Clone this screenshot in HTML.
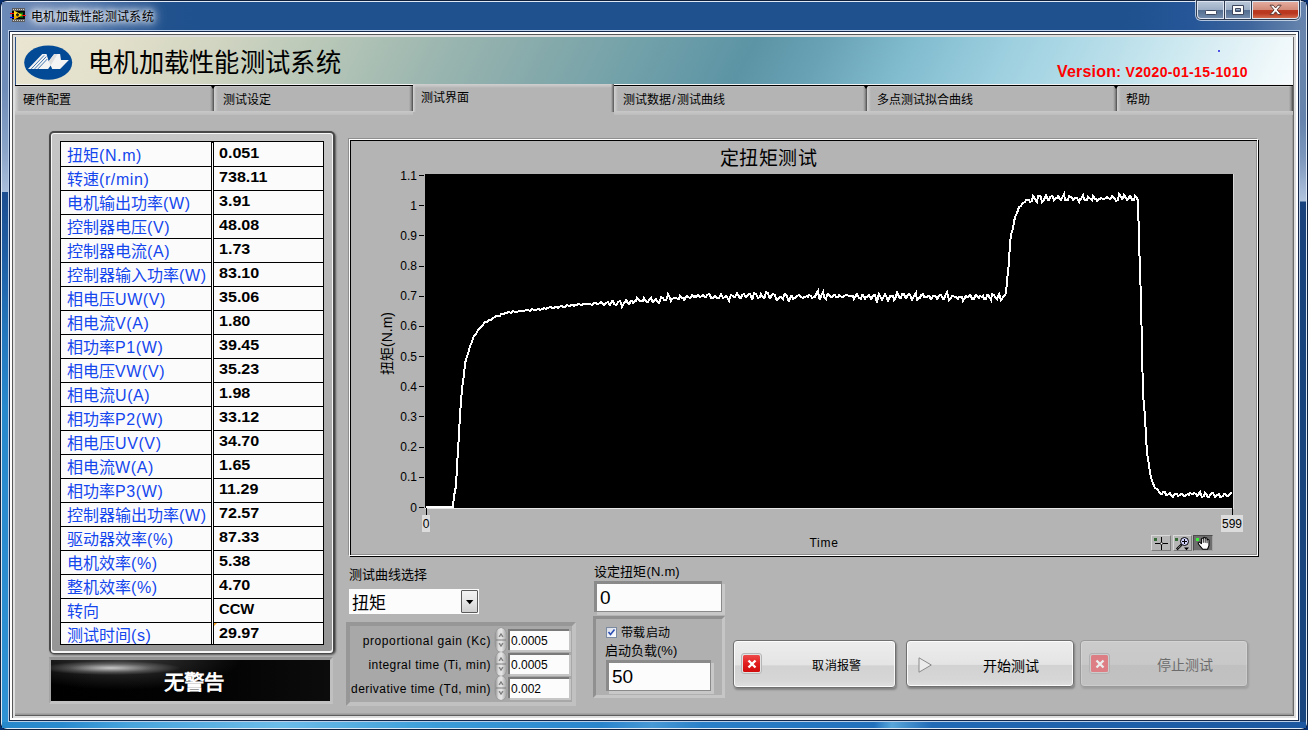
<!DOCTYPE html>
<html lang="zh-CN">
<head>
<meta charset="utf-8">
<title>电机加载性能测试系统</title>
<style>
*{box-sizing:border-box;margin:0;padding:0}
html,body{width:1308px;height:730px;overflow:hidden;background:#062e6e}
body{font-family:"Liberation Sans",sans-serif;font-size:12px;color:#000;position:relative;line-height:1}
.a{position:absolute;white-space:nowrap}
/* ---------- window frame ---------- */
#win{left:0;top:0;width:1308px;height:730px;border-radius:7px;background:#10213d;overflow:hidden}
#winhl{left:1px;top:1px;width:1306px;height:728px;border-radius:6px;background:#dfe9f6;overflow:hidden}
#tb{left:2px;top:2px;width:1304px;height:28px;background:linear-gradient(to right,#6c8ab7 0,#6785b3 30px,#4f74aa 80px,#335f9b 120px,#22528e 160px,#1e518e 200px,#1e518e 1120px,#265698 1190px,#3d659c 1245px,#6583ac 1300px)}
#fl{left:2px;top:30px;width:6px;height:698px;background:linear-gradient(to bottom,#6a88b4 0,#6f8cb8 60px,#8aa4c8 120px,#a9bedb 162px,#1c4e90 162px,#1f5ea4 225px,#2476bc 300px,#2888cc 376px,#2e92d4 698px)}
#fr{left:1300px;top:30px;width:6px;height:698px;background:linear-gradient(to bottom,#6985ac 0,#6583ac 90px,#7e99bd 130px,#b2c5de 171px,#17427c 172px,#19467f 698px)}
#fb{left:2px;top:722px;width:1304px;height:6px;background:linear-gradient(to right,#2888cc 0,#2a8ace 60px,#49a4dc 130px,#6cbce8 280px,#3b9cd8 436px,#2a84cc 600px,#4798d4 650px,#2a80c8 700px,#2270bc 872px,#58a6da 890px,#216ab6 930px,#1e60aa 1100px,#1b57a0 1304px)}
/* client edge */
#ce0{left:8px;top:30px;width:1292px;height:692px;background:#b9cde8}
#ce1{left:9px;top:31px;width:1290px;height:690px;background:#14284c}
#ce2{left:10px;top:32px;width:1288px;height:688px;background:#fff}
#ce3{left:12px;top:34px;width:1284px;height:684px;background:#585858}
#ce4{left:13px;top:35px;width:1283px;height:683px;background:#dedede}
#panel{left:15px;top:37px;width:1278px;height:678px;background:#b4b4b4}
#pr{left:1293px;top:37px;width:1px;height:679px;background:#6a6a6a}
#pr2{left:1292px;top:86px;width:1px;height:629px;background:#9c9c9c}
#pbt{left:15px;top:715px;width:1279px;height:1px;background:#5e5e5e}
#pbt2{left:15px;top:713px;width:1278px;height:2px;background:linear-gradient(to bottom,#acacac,#909090)}
/* title text */
#ttxt{left:31px;top:9px;height:16px;line-height:16px;font-size:12px;letter-spacing:.3px;color:#000;text-shadow:0 0 5px rgba(255,255,255,.95),0 0 8px rgba(255,255,255,.9),0 0 11px rgba(255,255,255,.8),0 0 15px rgba(255,255,255,.7),0 0 18px rgba(255,255,255,.5)}
/* window buttons */
#wb0{left:1195px;top:0;width:106px;height:21px;border-radius:0 0 6px 6px;background:rgba(235,242,250,.7)}
#wb{left:1196px;top:0;width:104px;height:20px;border-radius:0 0 5px 5px;background:#2e3a50}
#wbhl{left:1197px;top:1px;width:102px;height:18px;border-radius:0 0 4px 4px;background:#dce5f0}
.wbn{top:2px;height:16px;background:linear-gradient(to bottom,#b7c5d6 0,#9caec5 49%,#536e90 51%,#5c7798 70%,#728bad 100%)}
#bmin{left:1198px;width:25px;border-radius:0 0 0 3px}
#bmax{left:1226px;width:24px}
#bcls{left:1253px;width:45px;border-radius:0 0 3px 0;background:linear-gradient(to bottom,#e3ab9d 0,#d28a78 49%,#bd3a22 51%,#b7361e 70%,#d2694b 100%)}
.wsep{top:1px;width:1px;height:18px;background:#2e3a50}
/* ---------- header ---------- */
#hdr{left:15px;top:37px;width:1278px;height:49px;background:#000}
#hdrg{left:16px;top:37px;width:1277px;height:47px;background:linear-gradient(117deg,#e9e5d0 0,#e3e0cb 7.500%,#d1d5c1 15.500%,#b6c6b7 24.500%,#9db7b0 32.500%,#86aaab 41%,#70a0a9 49%,#5c94a5 57%,#69a2b5 62.500%,#82bccf 69.500%,#9ccfdf 76.500%,#b4dce8 83.500%,#d0eaf1 90.500%,#eef7fa 97.500%,#f6fbfd 100%)}
#hdrw{left:16px;top:84px;width:1277px;height:1px;background:#f4f4f4}
#hdrl{left:15px;top:37px;width:1px;height:48px;background:#2a5088}
#htitle{left:88px;top:47px;height:32px;line-height:32px;font-size:25px;color:#000;transform:scale(1.012,1.05);transform-origin:0 50%}
#ver{left:1057px;top:62px;height:20px;line-height:20px;color:#f00;font-weight:bold;font-size:14px;letter-spacing:.36px}
#ver b{font-size:16px;letter-spacing:.2px}
#dot{left:1218px;top:50px;width:2px;height:2px;border-radius:1px;background:#2020e0}
/* ---------- tabs ---------- */
.tab{top:86px;height:25px;background:#b4b4b4;border-top:1px solid #c6c6c6;font-size:12px;line-height:14px;padding-top:6px}
.tab:before{content:"";position:absolute;right:0;top:-1px;width:4px;height:25px;background:linear-gradient(to right,rgba(80,80,80,0),rgba(80,80,80,.35) 50%,#4a4a4a 100%)}
.tab:after{content:"";position:absolute;left:0;top:0;width:4px;height:24px;background:linear-gradient(to right,#d2d2d2,rgba(200,200,200,0))}
.tab s{position:absolute;right:-3px;top:-1px;width:0;height:0;border-left:2.500px solid transparent;border-right:2.500px solid transparent;border-top:3px solid #000;z-index:3}
#tabsel{top:84px;height:31px;background:linear-gradient(to bottom,#cfcfcf 0,#c4c4c4 2px,#b4b4b4 4px);font-size:12px;line-height:14px;padding-top:7px}
#tabsel:before{content:"";position:absolute;right:0;top:0;width:3px;height:28px;background:linear-gradient(to right,rgba(80,80,80,0),#555 100%)}
#tabsel:after{content:"";position:absolute;left:0;top:0;width:3px;height:28px;background:linear-gradient(to right,#d4d4d4,rgba(200,200,200,0))}
#pghl{left:15px;top:111px;width:1278px;height:4px;background:linear-gradient(to bottom,#c8c8c8,#bcbcbc)}
/* ---------- data table ---------- */
#tc{left:49px;top:131px;width:286px;height:523px;border-radius:5px;background:#484848;box-shadow:1px 1px 2px rgba(0,0,0,.5)}
#tc1{left:51px;top:133px;width:282px;height:520px;border-radius:3px;background:#f6f6f6}
#tc2{left:52px;top:134px;width:280px;height:517px;border-radius:2px;background:linear-gradient(to bottom,#c6c6c6 0,#aeaeae 50%,#959595 100%)}
#tbl{left:60px;top:141px;width:264px;height:504px;background:#000;overflow:hidden}
.tr{position:absolute;left:1px;width:262px;height:24px}
.tl{position:absolute;left:0;top:0;width:150px;height:23px;background:#fbfbfb;color:#1446ee;font-size:16px;line-height:23px;padding-left:6px;padding-top:1px;overflow:hidden;white-space:nowrap}
.tv{position:absolute;left:153px;top:0;width:109px;height:23px;background:#fbfbfb;color:#000;font-weight:bold;font-size:14.500px;line-height:18px;padding-left:5px;padding-top:1px;overflow:hidden;white-space:nowrap}
.tv span{display:inline-block;transform:scaleX(1.11);transform-origin:0 50%}
.tl i{font-style:normal;letter-spacing:.6px}
.tr.f .tl,.tr.f .tv{height:24px;padding-top:2px}
#tbl:after{content:"";position:absolute;left:0;bottom:0;width:264px;height:1px;background:#000}
#tdv{left:212px;top:143px;width:1px;height:501px;background:#fbfbfb}
/* alarm */
#al0{left:49px;top:657px;width:284px;height:47px;border:solid;border-width:3px 3px 3px 2px;border-color:#929292 #c0c0c0 #c2c2c2 #a4a4a4;background:#000}
#al{left:51px;top:660px;width:279px;height:41px;background:radial-gradient(ellipse 70px 7px at 60px 8px,rgba(255,255,255,.75),rgba(255,255,255,.22) 60%,rgba(255,255,255,0) 100%),radial-gradient(ellipse 120px 30px at 70px 0px,rgba(255,255,255,.22),rgba(255,255,255,0) 100%),linear-gradient(to right,#000 0,#030303 60%,#0c0c0c 100%);color:#fff;font-weight:bold;font-size:20.500px;line-height:41px;text-align:center;padding-left:6px;padding-top:2px}
/* ---------- chart ---------- */
#ch1{left:350px;top:140px;width:909px;height:417px;border:1px solid #000}
#ch0{left:349px;top:139px;width:909px;height:417px;border:1px solid #fff}
#chg{left:348px;top:138px;width:909px;height:417px;border:1px solid #8f8f8f}
#plot{left:425px;top:174px;width:808px;height:334px;background:#000}
#plothl{left:425px;top:508px;width:809px;height:1px;background:#e6e6e6}
#plothr{left:1233px;top:174px;width:1px;height:335px;background:#d8d8d8}
#ctitle{left:668.500px;top:146.500px;width:200px;height:24px;line-height:24px;text-align:center;font-size:19px;letter-spacing:.5px;transform:scaleY(1.03)}
.yl{position:absolute;left:0;width:67px;height:15px;line-height:15px;text-align:right;font-size:12px;white-space:nowrap}
.ytk{position:absolute;left:69px;width:5px;height:1px;background:#000}
#yax{left:350px;top:140px;width:80px;height:400px}
#ytitle{left:337px;top:335px;width:100px;height:17px;line-height:17px;text-align:center;font-size:14px;transform:rotate(-90deg)}
.xl{top:515px;height:17px;line-height:19px;background:#dcdcdc;font-size:12px;text-align:center}
.xtk{top:508px;width:1px;height:7px;background:#000}
#xtitle{left:774px;top:536px;width:100px;height:15px;line-height:15px;text-align:center;font-size:12px;letter-spacing:.7px}
.pb{top:535px;width:20px;height:16px;background:#b6b6b6;border:1px solid;border-color:#dadada #7c7c7c #7c7c7c #dadada}
/* ---------- controls ---------- */
.lbl13{font-size:13px;height:16px;line-height:16px}
#dd{left:349px;top:589px;width:130px;height:25px;background:#fcfcfc;font-size:17px;line-height:30px;padding-left:3px;overflow:hidden}
#ddb{left:461px;top:590px;width:17px;height:23px;border:1px solid #5a5a5a;border-radius:1px;background:linear-gradient(to bottom,#f4f4f4,#e6e6e6 50%,#d0d0d0)}
.cl{background:#a8a8a8;border:4px solid;border-color:#979797 #c1c1c1 #c1c1c1 #979797}
.cl2{background:#b0b0b0;border:3px solid;border-color:#909090 #c6c6c6 #c6c6c6 #909090}
.pl{left:350px;width:141px;text-align:right;font-size:12px;height:16px;line-height:16px;letter-spacing:.45px}
.inp{background:#fcfcfc;border:0;outline:3px solid #999}
.pin{left:510px;width:59px;height:19px;background:#fcfcfc;font-size:12px;line-height:21px;padding-left:1px;box-shadow:-1px -1px 0 1px #7a7a7a,1px 1px 0 1px #c6c6c6}
.spin{left:495px;width:12px;height:24px;border-radius:6px/9px;background:linear-gradient(to right,#8c8c8c 0,#dcdcdc 30%,#e4e4e4 55%,#9c9c9c 100%);box-shadow:0 0 1px #666}
.big{font-size:18px}
.rin{background:#fcfcfc;box-shadow:-1px -1px 0 2px #8a8a8a,2px 2px 0 2px #c8c8c8;font-size:19px;padding-left:3px}
#cb{left:606px;top:627px;width:11px;height:11px;border:1px solid #7a8aa0;background:linear-gradient(135deg,#d8dce8,#fff)}
/* buttons */
.btn{top:640px;height:47px;border:1px solid #707070;border-radius:4px;background:linear-gradient(to bottom,#ededed 0,#e4e4e4 52%,#d2d2d2 54%,#d6d6d6 85%,#e0e0e0 100%);box-shadow:inset 0 0 0 1px rgba(255,255,255,.85),1px 2px 2px rgba(0,0,0,.28)}
.btn.dis{border-color:#9a9a9a;background:linear-gradient(to bottom,#cbcbcb 0,#c8c8c8 52%,#c0c0c0 54%,#c2c2c2 100%);box-shadow:inset 0 0 0 1px rgba(255,255,255,.18),1px 2px 2px rgba(0,0,0,.12)}
.btx{top:656px;height:18px;line-height:18px;text-align:center;width:100px}
.ico{width:21px;height:21px;border-radius:3px;border:1px solid #b5b5b5;background:#e2e2e2}
.ico i{position:absolute;left:1px;top:1px;width:17px;height:17px;border-radius:1.500px;background:linear-gradient(to bottom,#ee4a4a 0,#e21f1f 50%,#d00c0c 100%);display:block}
</style>
</head>
<body>
<div id="win" class="a"></div>
<div id="winhl" class="a"></div>
<div id="tb" class="a"></div>
<div id="fl" class="a"></div>
<div id="fr" class="a"></div>
<div id="fb" class="a"></div>
<div id="ce0" class="a"></div><div id="ce1" class="a"></div><div id="ce2" class="a"></div><div id="ce3" class="a"></div><div id="ce4" class="a"></div>
<div id="panel" class="a"></div><div id="pr2" class="a"></div><div id="pr" class="a"></div><div id="pbt2" class="a"></div><div id="pbt" class="a"></div>

<!-- title bar -->
<svg class="a" style="left:9px;top:7px" width="18" height="16" viewBox="0 0 18 16">
<rect x="3" y="1" width="13" height="14" fill="#000"/>
<rect x="3" y="1" width="13" height="3" fill="#5c5c5c"/><rect x="3" y="12" width="13" height="3" fill="#5c5c5c"/>
<g fill="#cfcfcf"><rect x="4" y="2" width="1" height="1"/><rect x="6" y="2" width="1" height="1"/><rect x="8" y="2" width="1" height="1"/><rect x="10" y="2" width="1" height="1"/><rect x="12" y="2" width="1" height="1"/><rect x="14" y="2" width="1" height="1"/>
<rect x="4" y="13" width="1" height="1"/><rect x="6" y="13" width="1" height="1"/><rect x="8" y="13" width="1" height="1"/><rect x="10" y="13" width="1" height="1"/><rect x="12" y="13" width="1" height="1"/><rect x="14" y="13" width="1" height="1"/></g>
<path d="M11 5.5h3v5h-3z" fill="#0a7a0a"/>
<path d="M5 3.600L13.500 8 5 12.400z" fill="#ffd61a"/><path d="M5 8.500L12.500 8.500 5 12.400z" fill="#f2ac00"/>
<rect x="7" y="7" width="3" height="1.6" fill="#222"/><rect x="7.8" y="6.2" width="1.4" height="3.2" fill="#222"/>
<rect x="1" y="6" width="4" height="1" fill="#f00"/><rect x="1" y="10" width="4" height="1" fill="#00f"/><rect x="13" y="8" width="4" height="1" fill="#f00"/>
</svg>
<div id="ttxt" class="a">电机加载性能测试系统</div>
<div id="wb0" class="a"></div><div id="wb" class="a"></div><div id="wbhl" class="a"></div><div class="a wsep" style="left:1224px"></div><div class="a wsep" style="left:1251px"></div>
<div id="bmin" class="a wbn"></div><div id="bmax" class="a wbn"></div><div id="bcls" class="a wbn"></div>
<svg class="a" style="left:1196px;top:0" width="104" height="20" viewBox="0 0 104 20">
<rect x="9.500" y="10.500" width="11" height="4" rx=".8" fill="#fbfbfb" stroke="#3d465c" stroke-width="1"/>
<path d="M36.500 5.500h11v9h-11z M39.500 8.500v3h5v-3z" fill="#fbfbfb" fill-rule="evenodd" stroke="#3d465c" stroke-width="1" stroke-linejoin="round"/>
<path d="M74 5.200h3.300l2.300 2.800 2.300-2.800h3.300l-4 4.700 4 4.700h-3.300l-2.300-2.800-2.300 2.800h-3.300l4-4.700z" fill="#fbfbfb" stroke="#5e3a36" stroke-width="1" stroke-linejoin="round"/>
</svg>

<!-- header -->
<div id="hdr" class="a"></div><div id="hdrg" class="a"></div><div id="hdrw" class="a"></div><div id="hdrl" class="a"></div>
<svg class="a" style="left:22px;top:43px" width="54" height="40" viewBox="22 43 54 40">
<ellipse cx="48.200" cy="62.600" rx="24" ry="17.200" fill="#034a96"/>
<path d="M28 68.900L42.300 54.100H46.500L48.700 61.200 54.200 54.100H60.100L61 60H68.900L60.100 68.900H52.200L50.700 65.400 48.100 68.900z" fill="#f4f4f4"/>
<path d="M48.700 61.200L54.200 54.100H57.500L50.700 65.400z" fill="#dedede"/>
<path d="M31.300 68.900L44.200 55.300M34.600 68.900L46.300 56.600M37.900 68.900L47.300 59" stroke="#034a96" stroke-width=".75" fill="none"/>
</svg>
<div id="htitle" class="a">电机加载性能测试系统</div>
<div id="ver" class="a"><b>Version</b>: V2020-01-15-1010</div>
<div id="dot" class="a"></div>

<!-- tabs -->
<div id="pghl" class="a"></div>
<div class="a tab" style="left:15px;width:199px;padding-left:8px">硬件配置</div>
<div class="a tab" style="left:214px;width:199px;padding-left:9px"><s style="left:-3px;right:auto"></s>测试设定</div>
<div class="a tab" style="left:614px;width:253px;padding-left:9px">测试数据<span style="padding:0 1.200px">/</span>测试曲线</div>
<div class="a tab" style="left:867px;width:250px;padding-left:10px"><s style="left:-3px;right:auto"></s>多点测试拟合曲线</div>
<div class="a tab" style="left:1117px;width:176px;padding-left:9px"><s style="left:-3px;right:auto"></s>帮助</div>
<div id="tabsel" class="a" style="left:413px;width:201px;padding-left:8px">测试界面</div>

<!-- data table -->
<div id="tc" class="a"></div><div id="tc1" class="a"></div><div id="tc2" class="a"></div>
<div id="tbl" class="a">
<div class="tr f" style="top:1px"><div class="tl">扭矩<i>(N.m)</i></div><div class="tv"><span>0.051</span></div></div>
<div class="tr" style="top:26px"><div class="tl">转速<i>(r/min)</i></div><div class="tv"><span>738.11</span></div></div>
<div class="tr" style="top:50px"><div class="tl">电机输出功率<i>(W)</i></div><div class="tv"><span>3.91</span></div></div>
<div class="tr" style="top:74px"><div class="tl">控制器电压<i>(V)</i></div><div class="tv"><span>48.08</span></div></div>
<div class="tr" style="top:98px"><div class="tl">控制器电流<i>(A)</i></div><div class="tv"><span>1.73</span></div></div>
<div class="tr" style="top:122px"><div class="tl">控制器输入功率<i>(W)</i></div><div class="tv"><span>83.10</span></div></div>
<div class="tr" style="top:146px"><div class="tl">相电压<i>UW(V)</i></div><div class="tv"><span>35.06</span></div></div>
<div class="tr" style="top:170px"><div class="tl">相电流<i>V(A)</i></div><div class="tv"><span>1.80</span></div></div>
<div class="tr" style="top:194px"><div class="tl">相功率<i>P1(W)</i></div><div class="tv"><span>39.45</span></div></div>
<div class="tr" style="top:218px"><div class="tl">相电压<i>VW(V)</i></div><div class="tv"><span>35.23</span></div></div>
<div class="tr" style="top:242px"><div class="tl">相电流<i>U(A)</i></div><div class="tv"><span>1.98</span></div></div>
<div class="tr" style="top:266px"><div class="tl">相功率<i>P2(W)</i></div><div class="tv"><span>33.12</span></div></div>
<div class="tr" style="top:290px"><div class="tl">相电压<i>UV(V)</i></div><div class="tv"><span>34.70</span></div></div>
<div class="tr" style="top:314px"><div class="tl">相电流<i>W(A)</i></div><div class="tv"><span>1.65</span></div></div>
<div class="tr" style="top:338px"><div class="tl">相功率<i>P3(W)</i></div><div class="tv"><span>11.29</span></div></div>
<div class="tr" style="top:362px"><div class="tl">控制器输出功率<i>(W)</i></div><div class="tv"><span>72.57</span></div></div>
<div class="tr" style="top:386px"><div class="tl">驱动器效率<i>(%)</i></div><div class="tv"><span>87.33</span></div></div>
<div class="tr" style="top:410px"><div class="tl">电机效率<i>(%)</i></div><div class="tv"><span>5.38</span></div></div>
<div class="tr" style="top:434px"><div class="tl">整机效率<i>(%)</i></div><div class="tv"><span>4.70</span></div></div>
<div class="tr" style="top:458px"><div class="tl">转向</div><div class="tv"><span style="transform:scaleX(1.02)">CCW</span></div></div>
<div class="tr" style="top:482px"><div class="tl">测试时间<i>(s)</i></div><div class="tv"><span>29.97</span></div></div>
</div>
<div id="tdv" class="a"></div>
<svg class="a" style="left:214px;top:623px" width="4" height="4" viewBox="0 0 4 4"><path d="M0 0h3L0 3z" fill="#f0a020"/></svg>
<div id="al0" class="a"></div>
<div id="al" class="a">无警告</div>

<!-- chart -->
<div id="chg" class="a"></div><div id="ch1" class="a"></div><div id="ch0" class="a"></div>
<div id="ctitle" class="a">定扭矩测试</div>
<div id="plothl" class="a"></div><div id="plothr" class="a"></div>
<div id="plot" class="a"><svg width="808" height="334" viewBox="0 0 808 334" style="display:block"><polyline fill="none" stroke="#fff" stroke-width="2" stroke-linejoin="miter" shape-rendering="crispEdges" points="1,333 2,333 4,333 5,333 6,333 8,333 9,333 10,333 12,333 13,333 14,333 16,333 17,333 18,333 20,333 21,333 23,333 24,333 25,333 27,333 28,333 29,322 31,312 32,292 33,277 35,242 36,227 37,215 39,201 40,190 41,185 43,180 44,176 45,172 47,168 48,164 49,162 51,160 52,158 53,156 55,154 56,153 58,151 59,149 60,148 62,148 63,147 64,146 66,146 67,145 68,144 70,143 71,142 72,142 74,142 75,142 76,140 78,140 79,140 80,139 82,139 83,138 84,138 86,139 87,138 88,137 90,138 91,138 92,138 94,137 95,137 97,137 98,137 99,137 101,136 102,136 103,136 105,137 106,136 107,135 109,136 110,136 111,136 113,135 114,135 115,136 117,135 118,135 119,134 121,135 122,134 123,134 125,133 126,133 127,134 129,134 130,133 132,133 133,134 134,133 136,132 137,132 138,133 140,133 141,132 142,131 144,132 145,132 146,131 148,131 149,132 150,131 152,131 153,130 154,130 156,131 157,131 158,130 160,130 161,130 162,130 164,130 165,130 167,131 168,130 169,129 171,129 172,130 173,130 175,129 176,128 177,129 179,131 180,130 181,129 183,128 184,130 185,131 187,127 188,127 189,130 191,131 192,130 193,128 195,127 196,129 197,133 199,129 200,128 201,126 203,129 204,130 206,127 207,127 208,129 210,127 211,127 212,124 214,126 215,127 216,127 218,127 219,124 220,126 222,128 223,128 224,126 226,124 227,127 228,128 230,126 231,125 232,127 234,129 235,127 236,123 238,124 239,126 241,126 242,124 243,120 245,124 246,127 247,125 249,124 250,124 251,124 253,125 254,125 255,122 257,124 258,124 259,126 261,123 262,122 263,123 265,124 266,123 267,121 269,123 270,122 271,123 273,121 274,122 275,123 277,122 278,121 280,123 281,123 282,121 284,120 285,121 286,124 288,124 289,123 290,122 292,124 293,124 294,124 296,120 297,122 298,124 300,123 301,122 302,123 304,127 305,123 306,121 308,122 309,123 310,123 312,119 313,121 315,124 316,124 317,121 319,120 320,122 321,123 323,121 324,120 325,120 327,125 328,124 329,119 331,120 332,122 333,124 335,123 336,120 337,122 339,124 340,123 341,118 343,119 344,123 345,124 347,121 348,120 350,121 351,125 352,126 354,124 355,123 356,123 358,125 359,121 360,120 362,122 363,126 364,127 366,122 367,122 368,125 370,124 371,123 372,122 374,121 375,122 376,123 378,124 379,123 380,123 382,122 383,123 384,121 386,122 387,124 389,123 390,123 391,120 393,117 394,124 395,125 397,120 398,118 399,123 401,125 402,121 403,120 405,122 406,123 407,123 409,121 410,121 411,123 413,123 414,121 415,122 417,123 418,123 419,122 421,121 422,121 424,122 425,122 426,122 428,122 429,125 430,123 432,120 433,122 434,124 436,125 437,121 438,121 440,125 441,123 442,123 444,121 445,123 446,125 448,122 449,121 450,121 452,129 453,123 454,120 456,124 457,126 458,124 460,120 461,122 463,127 464,125 465,122 467,122 468,122 469,126 471,123 472,117 473,121 475,124 476,124 477,120 479,120 480,123 481,124 483,121 484,120 485,121 487,126 488,124 489,122 491,119 492,127 493,124 495,124 496,121 498,120 499,123 500,123 502,123 503,122 504,122 506,125 507,124 508,122 510,122 511,123 512,125 514,122 515,121 516,121 518,125 519,125 520,122 522,118 523,122 524,126 526,124 527,122 528,122 530,123 531,123 533,125 534,123 535,123 537,123 538,127 539,125 541,122 542,123 543,123 545,121 546,122 547,125 549,125 550,122 551,121 553,123 554,124 555,122 557,123 558,122 559,125 561,125 562,121 563,121 565,124 566,126 567,120 569,121 570,123 572,125 573,122 574,120 576,126 577,125 578,123 580,121 581,119 582,107 584,88 585,69 586,61 588,54 589,48 590,43 592,39 593,36 594,33 596,32 597,30 598,29 600,28 601,26 602,26 604,26 605,28 607,27 608,22 609,23 611,27 612,28 613,22 615,22 616,23 617,28 619,26 620,23 621,21 623,26 624,26 625,23 627,22 628,23 629,26 631,24 632,24 633,22 635,25 636,26 637,24 639,20 640,26 641,26 643,26 644,22 646,23 647,24 648,26 650,24 651,24 652,24 654,28 655,25 656,25 658,21 659,25 660,26 662,26 663,23 664,24 666,25 667,26 668,22 670,25 671,25 672,27 674,25 675,25 676,24 678,25 679,25 681,24 682,23 683,24 685,25 686,24 687,22 689,24 690,25 691,27 693,26 694,20 695,21 697,25 698,24 699,21 701,24 702,26 703,25 705,22 706,23 707,26 709,26 710,22 711,23 713,26 714,67 716,126 717,175 718,220 720,243 721,262 722,279 724,291 725,298 726,304 728,309 729,312 730,314 732,315 733,316 734,318 736,320 737,320 738,318 740,318 741,321 742,321 744,320 745,319 746,321 748,323 749,321 750,320 752,320 753,322 755,321 756,320 757,320 759,322 760,322 761,321 763,320 764,321 765,319 767,320 768,320 769,319 771,320 772,322 773,321 775,318 776,321 777,323 779,322 780,319 781,320 783,323 784,323 785,321 787,319 788,319 790,323 791,322 792,321 794,320 795,323 796,323 798,322 799,320 800,320 802,322 803,322 804,321 806,319 807,319"/></svg></div>
<div id="yax" class="a">
<div class="yl" style="top:28.5px">1.1</div><div class="ytk" style="top:35px"></div>
<div class="yl" style="top:58.7px">1</div><div class="ytk" style="top:65px"></div>
<div class="yl" style="top:88.9px">0.9</div><div class="ytk" style="top:95px"></div>
<div class="yl" style="top:119.0px">0.8</div><div class="ytk" style="top:126px"></div>
<div class="yl" style="top:149.2px">0.7</div><div class="ytk" style="top:156px"></div>
<div class="yl" style="top:179.4px">0.6</div><div class="ytk" style="top:186px"></div>
<div class="yl" style="top:209.6px">0.5</div><div class="ytk" style="top:216px"></div>
<div class="yl" style="top:239.8px">0.4</div><div class="ytk" style="top:246px"></div>
<div class="yl" style="top:270.0px">0.3</div><div class="ytk" style="top:276px"></div>
<div class="yl" style="top:300.1px">0.2</div><div class="ytk" style="top:307px"></div>
<div class="yl" style="top:330.3px">0.1</div><div class="ytk" style="top:337px"></div>
<div class="yl" style="top:360.5px">0</div><div class="ytk" style="top:367px"></div>

</div>
<div id="ytitle" class="a">扭矩(N.m)</div>
<div class="a xtk" style="left:426px"></div><div class="a xtk" style="left:1232px"></div>
<div class="a xl" style="left:422px;width:8px">0</div>
<div class="a xl" style="left:1221px;width:22px">599</div>
<div id="xtitle" class="a">Time</div>
<!-- graph palette -->
<div class="a pb" style="left:1151px"></div>
<div class="a pb" style="left:1173px;width:19px"></div>
<div class="a pb" style="left:1193px;background:#6e6e6e;border-color:#4c4c4c #a4a4a4 #a4a4a4 #4c4c4c"></div>
<svg class="a" style="left:1151px;top:535px" width="63" height="16" viewBox="1151 535 63 16">
<rect x="1154" y="538" width="3" height="3" fill="#356b35"/>
<path d="M1155 543.500h13M1161.500 537v13" stroke="#000" stroke-width="1" fill="none"/><circle cx="1161.500" cy="543.500" r="1.200" fill="#fff" stroke="#000" stroke-width=".7"/>
<rect x="1175" y="538" width="3" height="3" fill="#356b35"/>
<circle cx="1184.500" cy="541.500" r="4" fill="#d4d5fc" stroke="#000" stroke-width="1"/><path d="M1182 541.500h5M1184.500 539v5" stroke="#000" stroke-width="1" shape-rendering="crispEdges"/>
<path d="M1181.600 544.600L1176.800 549.400" stroke="#000" stroke-width="2.200"/><path d="M1180.800 545.400L1177.600 548.600" stroke="#d0d0d0" stroke-width=".7"/>
<path d="M1184 547.500h5l-2.500 2.800z" fill="#000"/>
<rect x="1196" y="538" width="3" height="3" fill="#3cf03c"/>
<g transform="translate(1197.400 536.700) scale(1.180 .98)"><path d="M4.500 12.800L1.200 8 .6 6.200 1.600 5.400 3.400 7.200V2.200Q4.200 .8 5 2.200V1.200Q5.800 -.2 6.600 1.200V1.800Q7.400 .4 8.200 1.800V3.400Q9 2.200 9.800 3.400V9L8.600 12.800z" fill="#fff" stroke="#000" stroke-width=".9" stroke-linejoin="round"/>
<path d="M5 2.200V6.200M6.600 1.800V6.200M8.200 3V6.600" stroke="#000" stroke-width=".8" fill="none"/></g>
</svg>

<!-- curve selector -->
<div class="a lbl13" style="left:349px;top:567px;letter-spacing:.1px">测试曲线选择</div>
<div id="dd" class="a">扭矩</div><div id="ddb" class="a"><svg width="15" height="21" viewBox="0 0 15 21" style="display:block"><path d="M4 9h7.400L7.700 13.200z" fill="#000"/></svg></div>

<!-- PID cluster -->
<div class="a cl" style="left:346px;top:622px;width:230px;height:84px"></div>
<div class="a pl" style="top:633px;letter-spacing:.62px">proportional gain (Kc)</div>
<div class="a pl" style="top:657px">integral time (Ti, min)</div>
<div class="a pl" style="top:681px">derivative time (Td, min)</div>
<div class="a spin" style="top:628px"><svg width="12" height="24" viewBox="0 0 12 24" style="display:block"><path d="M1 12h10" stroke="#7c7c7c" stroke-width="1"/><path d="M4 9l2-3.500 2 3.500M4 15l2 3.500 2-3.500" fill="none" stroke="#666" stroke-width=".9"/><path d="M4.500 7.800h3M4.500 16.200h3" stroke="#777" stroke-width=".7"/></svg></div><div class="a spin" style="top:652px"><svg width="12" height="24" viewBox="0 0 12 24" style="display:block"><path d="M1 12h10" stroke="#7c7c7c" stroke-width="1"/><path d="M4 9l2-3.500 2 3.500M4 15l2 3.500 2-3.500" fill="none" stroke="#666" stroke-width=".9"/><path d="M4.500 7.800h3M4.500 16.200h3" stroke="#777" stroke-width=".7"/></svg></div><div class="a spin" style="top:676px"><svg width="12" height="24" viewBox="0 0 12 24" style="display:block"><path d="M1 12h10" stroke="#7c7c7c" stroke-width="1"/><path d="M4 9l2-3.500 2 3.500M4 15l2 3.500 2-3.500" fill="none" stroke="#666" stroke-width=".9"/><path d="M4.500 7.800h3M4.500 16.200h3" stroke="#777" stroke-width=".7"/></svg></div>
<div class="a pin" style="top:631px">0.0005</div>
<div class="a pin" style="top:655px">0.0005</div>
<div class="a pin" style="top:679px">0.002</div>

<!-- set torque -->
<div class="a lbl13" style="left:594px;top:564px;letter-spacing:.15px">设定扭矩(N.m)</div>
<div class="a rin" style="left:597px;top:584px;width:124px;height:27px;line-height:28px">0</div>
<div class="a cl2" style="left:593px;top:616px;width:132px;height:82px"></div>
<div id="cb" class="a"><svg width="9" height="9" viewBox="0 0 9 9" style="display:block"><path d="M1.500 4l2 2.500L7.500 1.500" fill="none" stroke="#2c4fb4" stroke-width="1.600"/></svg></div>
<div class="a" style="left:621px;top:625px;height:16px;line-height:16px;font-size:12px;letter-spacing:.3px">带载启动</div>
<div class="a lbl13" style="left:605px;top:643px">启动负载(%)</div>
<div class="a rin" style="left:609px;top:663px;width:101px;height:27px;line-height:28px">50</div>

<!-- buttons -->
<div class="a btn" style="left:733px;width:163px;height:48px"></div>
<div class="a ico" style="left:741px;top:653px"><i></i></div>
<svg class="a" style="left:747px;top:659px" width="10" height="10" viewBox="0 0 10 10"><path d="M1.500 1.500L8.500 8.500M8.500 1.500L1.500 8.500" stroke="#fff" stroke-width="2.400"/></svg>
<div class="a btx" style="left:787px;top:657px;font-size:12px;letter-spacing:.4px">取消报警</div>

<div class="a btn" style="left:906px;width:168px"></div>
<svg class="a" style="left:917px;top:656px" width="17" height="18" viewBox="0 0 17 18"><path d="M2 1.800L14.300 9 2 16.200z" fill="#ececec" stroke="#8a8a8a" stroke-width="1"/></svg>
<div class="a btx" style="left:961px;top:657px;font-size:14px">开始测试</div>

<div class="a btn dis" style="left:1080px;width:168px"></div>
<div class="a ico" style="left:1089px;top:653px;border-color:#b2b2b2;background:#cccccc"><i style="background:#dc7e84"></i></div>
<svg class="a" style="left:1095px;top:659px" width="10" height="10" viewBox="0 0 10 10"><path d="M1.500 1.500L8.500 8.500M8.500 1.500L1.500 8.500" stroke="#ececec" stroke-width="2.400"/></svg>
<div class="a btx" style="left:1135px;top:656px;font-size:14px;color:#6c6c6c">停止测试</div>

</body>
</html>
